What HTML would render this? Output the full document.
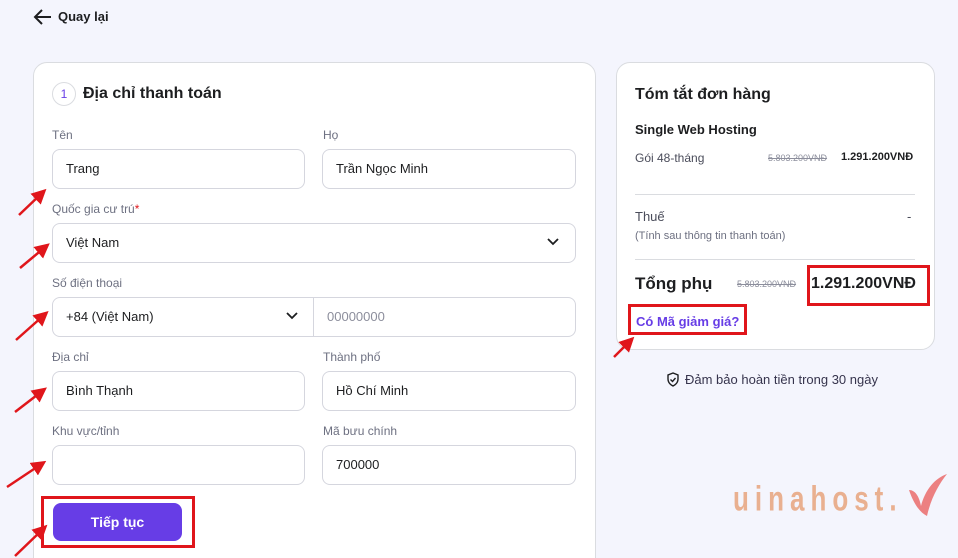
<!DOCTYPE html>
<html style="width:958px;height:558px;overflow:hidden"><head><meta charset="utf-8"><style>
*{box-sizing:border-box;margin:0;padding:0}
body{width:958px;height:558px;overflow:hidden;background:#f4f5fd;font-family:"Liberation Sans",sans-serif;color:#2f1c6a;position:relative}
.abs{position:absolute}
.card{position:absolute;background:#fff;border:1px solid #dadce0;border-radius:14px}
.lbl{position:absolute;font-size:12px;color:#6d7081}
.inp{position:absolute;height:40px;border:1px solid #d5d6de;border-radius:8px;font-size:13px;color:#1d1e20;padding:0 13px;line-height:38px;background:#fff}
.t{position:absolute;white-space:nowrap;color:#1d1e20}
.rb{position:absolute;border:3px solid #e0161b}
</style></head><body>
<svg class="abs" style="left:33px;top:8px" width="20" height="18" viewBox="0 0 20 18"><path d="M18 9H3M9 2L2 9l7 7" stroke="#1d1e20" stroke-width="2" fill="none"/></svg>
<div class="t" style="left:58px;top:9px;font-size:13px;font-weight:bold">Quay lại</div>

<div class="card" style="left:33px;top:62px;width:563px;height:520px"></div>
<div class="abs" style="left:52px;top:82px;width:24px;height:24px;border:1px solid #dadce0;border-radius:50%;font-size:12px;color:#673de6;text-align:center;line-height:22px">1</div>
<div class="t" style="left:83px;top:85px;font-size:16px;font-weight:bold">Địa chỉ thanh toán</div>

<div class="lbl" style="left:52px;top:128px">Tên</div>
<div class="lbl" style="left:323px;top:128px">Họ</div>
<div class="inp" style="left:52px;top:149px;width:253px">Trang</div>
<div class="inp" style="left:322px;top:149px;width:254px">Trần Ngọc Minh</div>

<div class="lbl" style="left:52px;top:202px">Quốc gia cư trú<span style="color:#e0161b">*</span></div>
<div class="inp" style="left:52px;top:223px;width:524px">Việt Nam</div>
<svg class="abs" style="left:546px;top:237px" width="14" height="10"><path d="M2 2l5 5 5-5" stroke="#1d1e20" stroke-width="1.8" fill="none"/></svg>

<div class="lbl" style="left:52px;top:276px">Số điện thoại</div>
<div class="inp" style="left:52px;top:297px;width:262px;border-radius:8px 0 0 8px">+84 (Việt Nam)</div>
<svg class="abs" style="left:285px;top:311px" width="14" height="10"><path d="M2 2l5 5 5-5" stroke="#1d1e20" stroke-width="1.8" fill="none"/></svg>
<div class="inp" style="left:313px;top:297px;width:263px;border-radius:0 8px 8px 0;color:#8c8e9c">00000000</div>

<div class="lbl" style="left:52px;top:350px">Địa chỉ</div>
<div class="lbl" style="left:323px;top:350px">Thành phố</div>
<div class="inp" style="left:52px;top:371px;width:253px">Bình Thạnh</div>
<div class="inp" style="left:322px;top:371px;width:254px">Hồ Chí Minh</div>

<div class="lbl" style="left:52px;top:424px">Khu vực/tỉnh</div>
<div class="lbl" style="left:323px;top:424px">Mã bưu chính</div>
<div class="inp" style="left:52px;top:445px;width:253px"></div>
<div class="inp" style="left:322px;top:445px;width:254px">700000</div>

<div class="abs" style="left:53px;top:503px;width:129px;height:38px;background:#673de6;border-radius:8px;color:#fff;font-weight:bold;font-size:14px;text-align:center;line-height:38px">Tiếp tục</div>
<div class="rb" style="left:41px;top:496px;width:154px;height:52px"></div>

<div class="card" style="left:616px;top:62px;width:319px;height:288px"></div>
<div class="t" style="left:635px;top:86px;font-size:16px;font-weight:bold">Tóm tắt đơn hàng</div>
<div class="t" style="left:635px;top:122px;font-size:13px;font-weight:bold">Single Web Hosting</div>
<div class="t" style="left:635px;top:151px;font-size:12px;color:#4a4c5a">Gói 48-tháng</div>
<div class="t" style="left:768px;top:153px;font-size:9px;color:#8c8e9c;text-decoration:line-through">5.803.200VNĐ</div>
<div class="t" style="left:841px;top:151px;font-size:11px;font-weight:bold">1.291.200VNĐ</div>
<div class="abs" style="left:635px;top:194px;width:280px;height:1px;background:#dadce0"></div>
<div class="t" style="left:635px;top:209px;font-size:13px;color:#4a4c5a">Thuế</div>
<div class="t" style="left:907px;top:209px;font-size:13px;color:#4a4c5a">-</div>
<div class="t" style="left:635px;top:230px;font-size:11px;color:#6d7081">(Tính sau thông tin thanh toán)</div>
<div class="abs" style="left:635px;top:259px;width:280px;height:1px;background:#dadce0"></div>
<div class="t" style="left:635px;top:274px;font-size:17px;font-weight:bold">Tổng phụ</div>
<div class="t" style="left:737px;top:279px;font-size:9px;color:#8c8e9c;text-decoration:line-through">5.803.200VNĐ</div>
<div class="t" style="left:811px;top:275px;font-size:16px;font-weight:bold">1.291.200VNĐ</div>
<div class="rb" style="left:807px;top:265px;width:123px;height:41px"></div>
<div class="t" style="left:636px;top:314px;font-size:13px;font-weight:bold;color:#673de6">Có Mã giảm giá?</div>
<div class="rb" style="left:628px;top:304px;width:119px;height:31px"></div>

<svg class="abs" style="left:666px;top:372px" width="14" height="15" viewBox="0 0 14 15"><path d="M7 1L2 3v4c0 3 2 5.5 5 7 3-1.5 5-4 5-7V3z" stroke="#1d1e20" stroke-width="1.4" fill="none"/><path d="M4.5 7.5l2 2 3-3.5" stroke="#1d1e20" stroke-width="1.4" fill="none"/></svg>
<div class="t" style="left:685px;top:372px;font-size:13px;color:#36344d">Đảm bảo hoàn tiền trong 30 ngày</div>

<div class="t" style="left:733px;top:478px;font-size:26px;font-weight:bold;color:#e8a47e;letter-spacing:6px;transform:scaleY(1.35);transform-origin:left top;opacity:.85">uinahost.</div>
<svg class="abs" style="left:905px;top:472px" width="44" height="46"><path d="M4 18c6 0 10 6 12 16C20 18 30 6 42 2 34 12 26 26 22 44 14 40 8 30 4 18z" fill="#ea6b6b" opacity=".85"/></svg>

<svg class="abs" style="left:0;top:0" width="958" height="558">
<defs><marker id="a" markerWidth="6" markerHeight="6" refX="3" refY="3" orient="auto"><path d="M0 0L6 3 0 6z" fill="#e0161b"/></marker></defs>
<g stroke="#e0161b" stroke-width="2.5" marker-end="url(#a)">
<line x1="19" y1="215" x2="41" y2="194"/>
<line x1="20" y1="268" x2="44" y2="248"/>
<line x1="16" y1="340" x2="43" y2="316"/>
<line x1="15" y1="412" x2="41" y2="392"/>
<line x1="7" y1="487" x2="40" y2="465"/>
<line x1="15" y1="556" x2="42" y2="530"/>
<line x1="614" y1="357" x2="629" y2="342"/>
</g></svg>
</body></html>
